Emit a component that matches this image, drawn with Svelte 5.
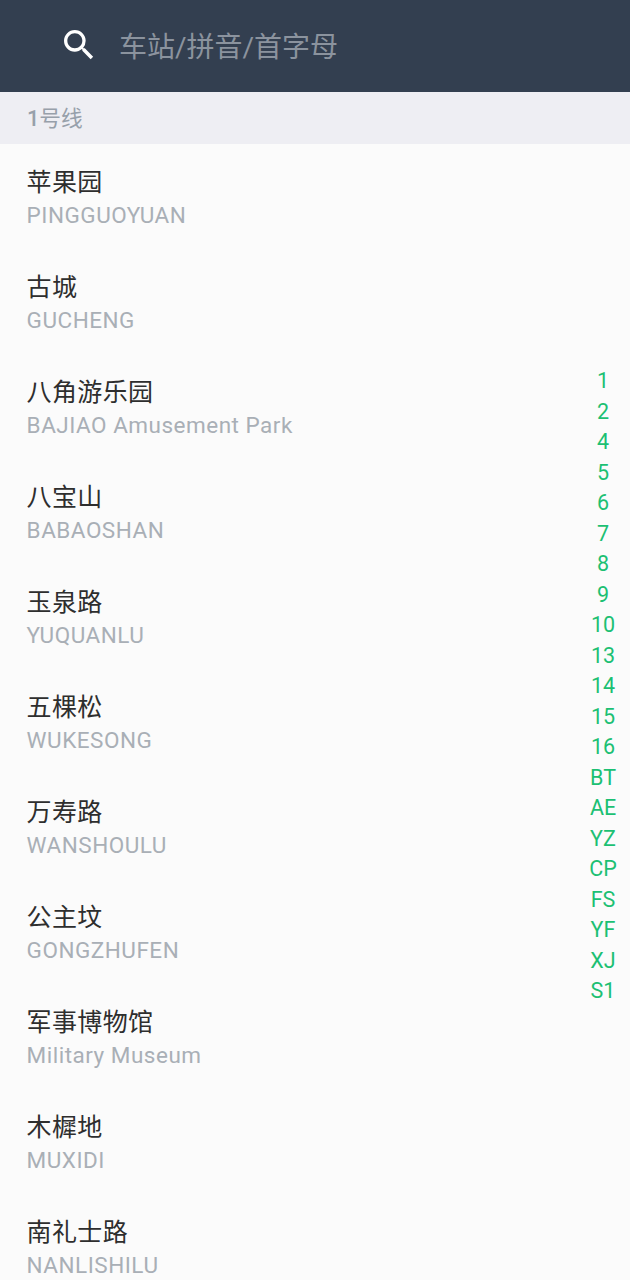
<script>
  const stations = [
    ['苹果园','PINGGUOYUAN'],['古城','GUCHENG'],['八角游乐园','BAJIAO Amusement Park'],['八宝山','BABAOSHAN'],
    ['玉泉路','YUQUANLU'],['五棵松','WUKESONG'],['万寿路','WANSHOULU'],['公主坟','GONGZHUFEN'],
    ['军事博物馆','Military Museum'],['木樨地','MUXIDI'],['南礼士路','NANLISHILU']
  ];
  const idx = ['1','2','4','5','6','7','8','9','10','13','14','15','16','BT','AE','YZ','CP','FS','YF','XJ','S1'];
</script>

<div class="page">
  <header class="bar">
    <svg class="icon" width="40" height="40" viewBox="0 0 24 24" fill="#fff"><path d="M15.5 14h-.79l-.28-.27A6.47 6.47 0 0 0 16 9.5 6.5 6.5 0 1 0 9.5 16c1.61 0 3.09-.59 4.23-1.57l.27.28v.79l5 4.99L20.49 19l-4.99-5zm-6 0C7.01 14 5 11.99 5 9.5S7.01 5 9.5 5 14 7.01 14 9.5 11.99 14 9.5 14z"/></svg>
    <span class="ph">车站/拼音/首字母</span>
  </header>
  <div class="section"><b>1</b>号线</div>
  <ul class="list">
    {#each stations as s}
      <li><div class="cn">{s[0]}</div><div class="en">{s[1]}</div></li>
    {/each}
  </ul>
  <nav class="index">
    {#each idx as i}<span>{i}</span>{/each}
  </nav>
</div>

<style>
  :global(body) { margin: 0; background: #fbfbfb; }
  .page { position: relative; width: 630px; height: 1280px; overflow: hidden; background: #fbfbfb; font-family: Roboto, "Noto Sans CJK SC", sans-serif; }
  .bar { height: 92px; background: #333f50; display: flex; align-items: center; padding-left: 59px; padding-bottom: 2px; box-sizing: border-box; }
  .icon { flex: none; }
  .ph { margin-left: 20px; color: #8b939e; font-size: 28px; }
  .section { height: 52px; line-height: 54px; background: #eeeef3; color: #97a0aa; font-size: 21.7px; padding-left: 27px; }
  .section b { font-weight: 500; }
  .list { list-style: none; margin: 0; padding: 0; }
  li { height: 105px; box-sizing: border-box; padding-top: 22px; padding-left: 27px; }
  .cn { font-size: 25px; line-height: 34px; color: #2e2e2e; margin-left: -0.5px; letter-spacing: 0.4px; }
  .en { font-size: 22.5px; line-height: 34px; color: #a9afb6; letter-spacing: 0.5px; margin-top: -2px; margin-left: -0.4px; }
  .index { position: absolute; right: 0; top: 366px; width: 54px; display: flex; flex-direction: column; align-items: center; }
  .index span { height: 30.5px; line-height: 30.5px; font-size: 21.5px; color: #1cc073; }
</style>
